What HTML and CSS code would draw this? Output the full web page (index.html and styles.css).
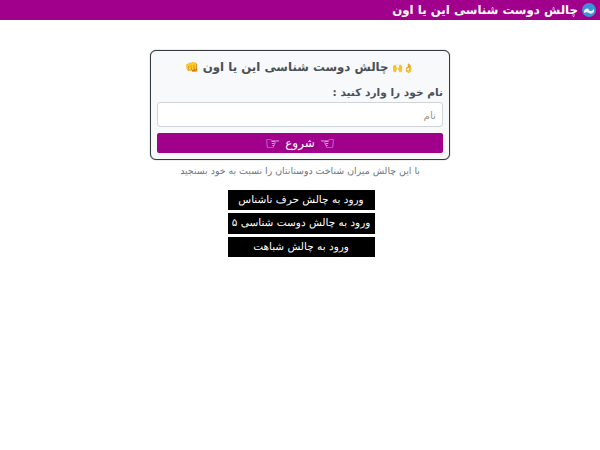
FILE: index.html
```html
<!DOCTYPE html>
<html lang="fa" dir="rtl">
<head>
  <meta charset="utf-8">
  <title>چالش دوست شناسی این یا اون</title>
  <link rel="stylesheet" href="styles.css">
</head>
<body>
  <header class="topbar">
    <svg class="topbar-logo" viewBox="0 0 14 14" width="14" height="14">
      <circle cx="7" cy="7" r="7" fill="#3f8fd8"/>
      <path d="M2 8c2-3 4-3 5-1s3 1 5-1v3c-2 2-4 2-5 1s-3-1-5 0z" fill="#e8f4fb"/>
    </svg>
    <span>چالش دوست شناسی این یا اون</span>
  </header>

  <main class="container">
    <form class="card">
      <h1 class="card-title"><span class="emoji">👌🙌</span> چالش دوست شناسی این یا اون <span class="emoji-fist">👊</span></h1>
      <label class="name-label" for="name">نام خود را وارد کنید :</label>
      <input class="name-input" id="name" type="text" placeholder="نام">
      <button class="start-btn" type="button"><span class="hand">☜</span>شروع<span class="hand">☞</span></button>
    </form>

    <p class="hint">با این چالش میزان شناخت دوستانتان را نسبت به خود بسنجید</p>

    <div class="links">
      <a class="link-btn" href="#">ورود به چالش حرف ناشناس</a>
      <a class="link-btn" href="#">ورود به چالش دوست شناسی ۵</a>
      <a class="link-btn" href="#">ورود به چالش شباهت</a>
    </div>
  </main>
</body>
</html>
```

FILE: styles.css
```css
* {
  box-sizing: border-box;
}

body {
  margin: 0;
  font-family: "DejaVu Sans", sans-serif;
  text-rendering: geometricPrecision;
  background: #fff;
  color: #212529;
}

.topbar {
  display: flex;
  align-items: center;
  gap: 4px;
  height: 20px;
  padding: 0 4px;
  background: #a0008c;
  color: #fff;
  font-size: 11.8px;
  font-weight: 700;
}

.container {
  display: flex;
  flex-direction: column;
  align-items: center;
  padding-top: 30px;
}

.card {
  display: flex;
  flex-direction: column;
  width: 300px;
  height: 110px;
  padding: 6px;
  background: #f8f9fa;
  border: 1px solid #343a40;
  border-radius: 6px;
  box-shadow: 0 0 1px #495057;
}

.card-title {
  margin: 2px 0 9px;
  font-size: 11.8px;
  line-height: 16px;
  font-weight: 700;
  text-align: center;
  color: #495057;
}

.emoji {
  font-size: 9px;
}

.emoji-fist {
  font-size: 11px;
}

.name-label {
  margin-bottom: 2px;
  font-size: 10.6px;
  line-height: 14px;
  font-weight: 700;
  color: #495057;
}

.name-input {
  height: 25px;
  margin-bottom: 6px;
  padding: 0 6px;
  font: 10.5px "DejaVu Sans", sans-serif;
  background: #fff;
  border: 1px solid #ced4da;
  border-radius: 3px;
}

.name-input::placeholder {
  color: #999;
}

.start-btn {
  display: flex;
  align-items: center;
  justify-content: center;
  gap: 5px;
  height: 20px;
  padding: 0;
  font: 12px "DejaVu Sans", sans-serif;
  color: #fff;
  background: #a0008c;
  border: 0;
  border-radius: 2px;
}

.hand {
  font-size: 17px;
}

.hint {
  margin: 6px 0 12px;
  font-size: 9.4px;
  line-height: 12px;
  color: #6c757d;
}

.links {
  display: flex;
  flex-direction: column;
  gap: 3px;
  width: 147px;
  margin-left: 2px;
}

.link-btn {
  padding: 3px 0;
  font-size: 10.5px;
  line-height: 14.3px;
  text-align: center;
  text-decoration: none;
  color: #fff;
  background: #000;
}
```
